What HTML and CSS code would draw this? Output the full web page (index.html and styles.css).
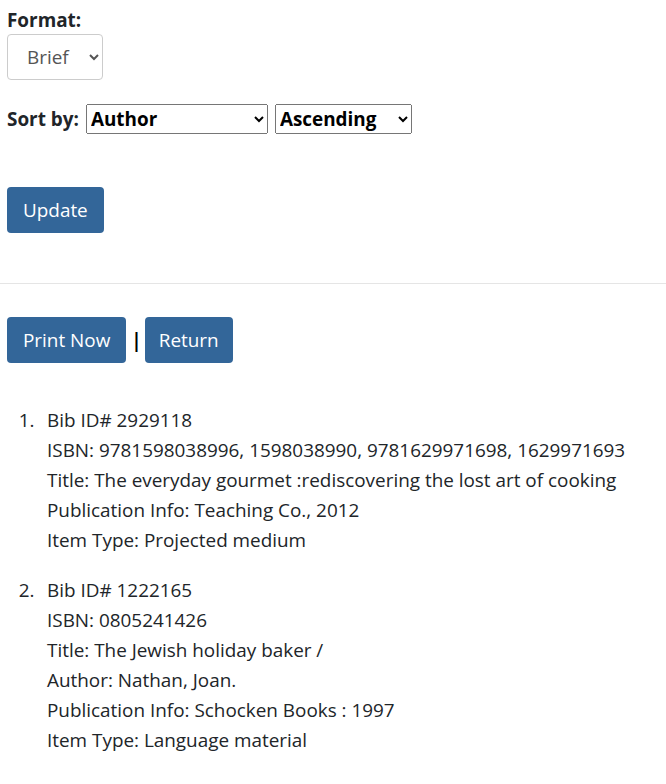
FILE: index.html
```html
<!DOCTYPE html>
<html>
<head>
<meta charset="utf-8">
<link rel="stylesheet" href="styles.css">
</head>
<body>
<form class="options">
  <label class="lbl" for="fmt">Format:</label>
  <select id="fmt" class="fmt-select"><option>Brief</option></select>
  <div class="sort-row">
    <span class="lbl">Sort by:</span>
    <select class="sort-select author"><option>Author</option></select>
    <select class="sort-select order"><option>Ascending</option></select>
  </div>
  <button type="button" class="btn update">Update</button>
</form>
<hr class="sep">
<div class="actions">
  <button type="button" class="btn">Print Now</button>
  <span class="pipe">|</span>
  <button type="button" class="btn ret">Return</button>
</div>
<ol class="results">
  <li>
    <div>Bib ID# 2929118</div>
    <div>ISBN: 9781598038996, 1598038990, 9781629971698, 1629971693</div>
    <div>Title: The everyday gourmet :rediscovering the lost art of cooking</div>
    <div>Publication Info: Teaching Co., 2012</div>
    <div>Item Type: Projected medium</div>
  </li>
  <li>
    <div>Bib ID# 1222165</div>
    <div>ISBN: 0805241426</div>
    <div>Title: The Jewish holiday baker /</div>
    <div>Author: Nathan, Joan.</div>
    <div>Publication Info: Schocken Books : 1997</div>
    <div>Item Type: Language material</div>
  </li>
</ol>
</body>
</html>
```
FILE: styles.css
```css
html, body {
  margin: 0;
  padding: 0;
  background: #fff;
}
body {
  font-family: "Open Sans", "Noto Sans", sans-serif;
  font-size: 18.9px;
  color: #212529;
  line-height: 30px;
}
.options {
  display: flex;
  flex-direction: column;
  align-items: flex-start;
  padding: 5px 7px 0 7px;
  margin: 0;
}
.lbl {
  font-weight: 700;
  line-height: 30px;
}
.fmt-select {
  width: 96px;
  height: 46px;
  font-family: inherit;
  font-size: 18.9px;
  color: #555;
  background: #fff;
  border: 1px solid #ccc;
  border-radius: 4px;
  padding: 0 6px 0 15px;
  margin: -1px 0 0 0;
}
.sort-row {
  display: flex;
  align-items: center;
  gap: 7px;
  margin-top: 24px;
}
.sort-row .lbl {
  margin-right: 0;
}
.sort-select {
  height: 30px;
  font-family: inherit;
  font-size: 18.9px;
  font-weight: 700;
  color: #000;
  margin: 0;
}
.author { width: 182px; }
.order { width: 137px; }
.btn {
  height: 46px;
  padding: 0 16px;
  border: none;
  border-radius: 4px;
  background: #336699;
  color: #fff;
  font-family: inherit;
  font-size: 18.9px;
  line-height: 46px;
  cursor: pointer;
}
.ret {
  padding: 0 14px;
}
.update {
  margin-top: 53px;
}
.sep {
  border: none;
  border-top: 1px solid #e5e5e5;
  margin: 50px 0 0 0;
  height: 0;
}
.actions {
  display: flex;
  align-items: center;
  gap: 5px;
  padding: 0 7px;
  margin-top: 33px;
}
.pipe {
  font-weight: 700;
  color: #000;
  margin-right: -2px;
}
.results {
  margin: 42px 0 0 0;
  padding-left: 47px;
}
.results li::marker {
  content: counter(list-item) ".\2002\2009";
}
.results li {
  margin-bottom: 20px;
}
```
